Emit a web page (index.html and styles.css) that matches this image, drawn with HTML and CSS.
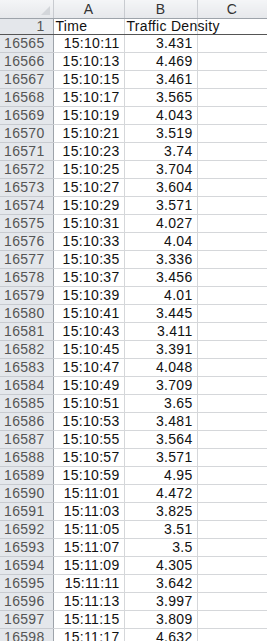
FILE: index.html
```html
<!DOCTYPE html>
<html>
<head>
<meta charset="utf-8">
<link rel="stylesheet" href="styles.css">
</head>
<body>
<table class="sheet">
<colgroup><col class="c-rh"><col class="c-a"><col class="c-b"><col class="c-c"></colgroup>
<tr class="colhead"><th class="corner"><span class="tri"></span></th><th>A</th><th>B</th><th>C</th></tr>
<tr class="first"><th class="rh">1</th><td>Time</td><td class="spill">Traffic Density</td><td></td></tr>
<tr><th class="rh">16565</th><td class="num">15:10:11</td><td class="num">3.431</td><td></td></tr>
<tr><th class="rh">16566</th><td class="num">15:10:13</td><td class="num">4.469</td><td></td></tr>
<tr><th class="rh">16567</th><td class="num">15:10:15</td><td class="num">3.461</td><td></td></tr>
<tr><th class="rh">16568</th><td class="num">15:10:17</td><td class="num">3.565</td><td></td></tr>
<tr><th class="rh">16569</th><td class="num">15:10:19</td><td class="num">4.043</td><td></td></tr>
<tr><th class="rh">16570</th><td class="num">15:10:21</td><td class="num">3.519</td><td></td></tr>
<tr><th class="rh">16571</th><td class="num">15:10:23</td><td class="num">3.74</td><td></td></tr>
<tr><th class="rh">16572</th><td class="num">15:10:25</td><td class="num">3.704</td><td></td></tr>
<tr><th class="rh">16573</th><td class="num">15:10:27</td><td class="num">3.604</td><td></td></tr>
<tr><th class="rh">16574</th><td class="num">15:10:29</td><td class="num">3.571</td><td></td></tr>
<tr><th class="rh">16575</th><td class="num">15:10:31</td><td class="num">4.027</td><td></td></tr>
<tr><th class="rh">16576</th><td class="num">15:10:33</td><td class="num">4.04</td><td></td></tr>
<tr><th class="rh">16577</th><td class="num">15:10:35</td><td class="num">3.336</td><td></td></tr>
<tr><th class="rh">16578</th><td class="num">15:10:37</td><td class="num">3.456</td><td></td></tr>
<tr><th class="rh">16579</th><td class="num">15:10:39</td><td class="num">4.01</td><td></td></tr>
<tr><th class="rh">16580</th><td class="num">15:10:41</td><td class="num">3.445</td><td></td></tr>
<tr><th class="rh">16581</th><td class="num">15:10:43</td><td class="num">3.411</td><td></td></tr>
<tr><th class="rh">16582</th><td class="num">15:10:45</td><td class="num">3.391</td><td></td></tr>
<tr><th class="rh">16583</th><td class="num">15:10:47</td><td class="num">4.048</td><td></td></tr>
<tr><th class="rh">16584</th><td class="num">15:10:49</td><td class="num">3.709</td><td></td></tr>
<tr><th class="rh">16585</th><td class="num">15:10:51</td><td class="num">3.65</td><td></td></tr>
<tr><th class="rh">16586</th><td class="num">15:10:53</td><td class="num">3.481</td><td></td></tr>
<tr><th class="rh">16587</th><td class="num">15:10:55</td><td class="num">3.564</td><td></td></tr>
<tr><th class="rh">16588</th><td class="num">15:10:57</td><td class="num">3.571</td><td></td></tr>
<tr><th class="rh">16589</th><td class="num">15:10:59</td><td class="num">4.95</td><td></td></tr>
<tr><th class="rh">16590</th><td class="num">15:11:01</td><td class="num">4.472</td><td></td></tr>
<tr><th class="rh">16591</th><td class="num">15:11:03</td><td class="num">3.825</td><td></td></tr>
<tr><th class="rh">16592</th><td class="num">15:11:05</td><td class="num">3.51</td><td></td></tr>
<tr><th class="rh">16593</th><td class="num">15:11:07</td><td class="num">3.5</td><td></td></tr>
<tr><th class="rh">16594</th><td class="num">15:11:09</td><td class="num">4.305</td><td></td></tr>
<tr><th class="rh">16595</th><td class="num">15:11:11</td><td class="num">3.642</td><td></td></tr>
<tr><th class="rh">16596</th><td class="num">15:11:13</td><td class="num">3.997</td><td></td></tr>
<tr><th class="rh">16597</th><td class="num">15:11:15</td><td class="num">3.809</td><td></td></tr>
<tr><th class="rh">16598</th><td class="num">15:11:17</td><td class="num">4.632</td><td></td></tr>
</table>
</body>
</html>
```
FILE: styles.css
```css
html, body {
  margin: 0;
  padding: 0;
  background: #ffffff;
  overflow: hidden;
}
.sheet {
  border-collapse: collapse;
  table-layout: fixed;
  width: 267px;
  font-family: "Liberation Sans", Arial, sans-serif;
  font-size: 14px;
  letter-spacing: 0.3px;
  color: #111;
}
.c-rh { width: 53px; }
.c-a { width: 71px; }
.c-b { width: 73px; }
.c-c { width: 70px; }
.sheet th, .sheet td {
  padding: 0 2px;
  height: 17px;
  line-height: 17px;
  border-right: 1px solid #d5d7da;
  border-bottom: 1px solid #d5d7da;
  white-space: nowrap;
  overflow: hidden;
  font-weight: normal;
}
.colhead th {
  height: 18px;
  line-height: 18px;
  background: linear-gradient(#f4f5f7, #e6e8eb);
  border-right: 1px solid #c8cbd0;
  border-bottom: 1px solid #9da3aa;
  color: #333;
  text-align: center;
}
.corner {
  position: relative;
}
.tri {
  position: absolute;
  right: 3px;
  bottom: 3px;
  width: 0;
  height: 0;
  border-left: 9px solid transparent;
  border-bottom: 9px solid #d3d6da;
}
.rh {
  background: #e4e7eb;
  color: #555;
  text-align: right;
  border-right: 1px solid #9da3aa !important;
  border-bottom: 1px solid #c8cbd0 !important;
  padding-right: 8px !important;
}
.first th, .first td {
  height: 15px;
  line-height: 15px;
  border-bottom: 1px solid #555 !important;
  text-align: left;
}
.first .rh { text-align: right; }
.sheet .spill {
  overflow: visible;
  position: relative;
  z-index: 1;
}
.sheet .num {
  text-align: right;
  padding-right: 4px;
}
```
